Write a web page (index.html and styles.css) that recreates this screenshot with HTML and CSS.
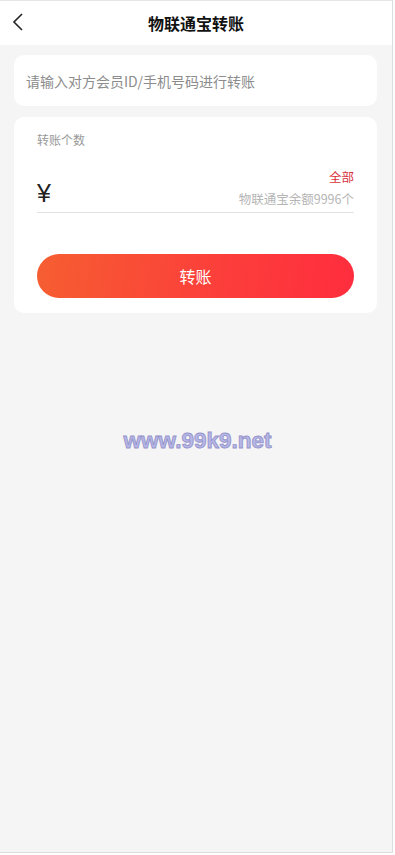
FILE: index.html
```html
<!DOCTYPE html>
<html lang="zh">
<head>
<meta charset="utf-8">
<title>物联通宝转账</title>
<link rel="stylesheet" href="styles.css">
</head>
<body>
<div class="frame">
  <header class="header">
    <span class="back">
      <svg width="12" height="18" viewBox="0 0 12 18"><path d="M10 1 L2 9 L10 17" fill="none" stroke="#222" stroke-width="1.6"/></svg>
    </span>
    <h1 class="title">物联通宝转账</h1>
  </header>
  <main class="main">
    <div class="card card-input">
      <span class="placeholder">请输入对方会员ID/手机号码进行转账</span>
    </div>
    <div class="card card-amount">
      <div class="label">转账个数</div>
      <div class="amount-row">
        <span class="yen">¥</span>
        <div class="amount-right">
          <span class="all">全部</span>
          <span class="balance">物联通宝余额9996个</span>
        </div>
      </div>
      <button class="btn">转账</button>
    </div>
    <div class="watermark">www.99k9.net</div>
  </main>
</div>
</body>
</html>
```
FILE: styles.css
```css
html, body {
  margin: 0;
  padding: 0;
  background: #fff;
}
body {
  font-family: "Noto Sans CJK SC", "Liberation Sans", sans-serif;
}
.frame {
  width: 393px;
  height: 853px;
  box-sizing: border-box;
  border-top: 1px solid #e6e6e6;
  border-right: 1px solid #dcdcdc;
  border-bottom: 1px solid #dcdcdc;
  background: #f5f5f5;
  display: flex;
  flex-direction: column;
}
.header {
  height: 44px;
  background: #fff;
  display: flex;
  align-items: center;
  justify-content: center;
  position: relative;
}
.back {
  position: absolute;
  left: 12px;
  top: 12px;
  display: flex;
}
.title {
  margin: 0;
  font-size: 16px;
  font-weight: bold;
  color: #111;
  line-height: 1;
}
.main {
  padding: 10px 15px 0 14px;
  display: flex;
  flex-direction: column;
  gap: 11px;
}
.card {
  background: #fff;
  border-radius: 10px;
}
.card-input {
  height: 51px;
  display: flex;
  align-items: center;
  padding-left: 12px;
}
.placeholder {
  font-size: 14px;
  color: #8c8c8c;
}
.card-amount {
  padding: 14px 23px 15px 23px;
  display: flex;
  flex-direction: column;
}
.label {
  font-size: 12px;
  color: #999;
  line-height: 18px;
}
.amount-row {
  margin-top: 19px;
  display: flex;
  justify-content: space-between;
  align-items: flex-end;
  border-bottom: 1px solid #e2e2e2;
  padding-bottom: 5px;
}
.yen {
  font-family: "Liberation Sans", sans-serif;
  font-size: 25px;
  font-weight: 300;
  color: #222;
  line-height: 28px;
  margin-bottom: 0;
}
.amount-right {
  display: flex;
  flex-direction: column;
  align-items: flex-end;
  gap: 5px;
}
.all {
  font-size: 12.5px;
  color: #d9303a;
  line-height: 17px;
}
.balance {
  font-size: 12.5px;
  color: #b5b5b5;
  line-height: 17px;
}
.btn {
  margin-top: 41px;
  height: 44px;
  border: none;
  border-radius: 22px;
  background: linear-gradient(100deg, #f65e31 0%, #fc3d3b 60%, #ff2d3e 100%);
  color: #fff;
  font-family: inherit;
  font-size: 16px;
  padding: 0;
}
.watermark {
  margin-top: 104px;
  padding-left: 4px;
  text-align: center;
  font-family: "Liberation Sans", sans-serif;
  font-weight: bold;
  font-size: 22.5px;
  color: #b8b8e6;
  -webkit-text-stroke: 0.9px #9494cc;
}
```
